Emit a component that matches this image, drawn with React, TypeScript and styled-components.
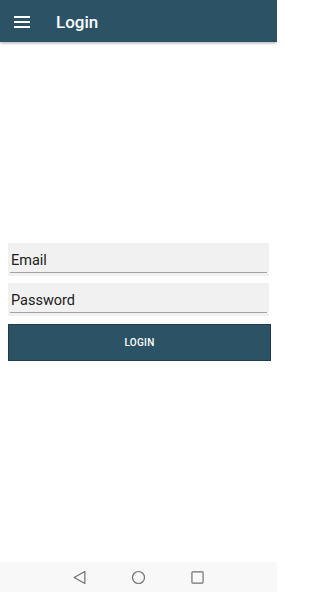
import styled, { createGlobalStyle } from 'styled-components';

const GlobalStyle = createGlobalStyle`
	html, body, #root {
		margin: 0;
		padding: 0;
		height: 100%;
	}
	body {
		font-family: Roboto, "Noto Sans", sans-serif;
		background: #ffffff;
	}
	* {
		box-sizing: border-box;
	}
`;

const App = () => {
	return (
		<Screen>
			<GlobalStyle />
			<AppBar>
				<MenuButton aria-label="menu">
					<svg width="16" height="12" viewBox="0 0 16 12">
						<rect x="0" y="0" width="16" height="2" fill="#ffffff" />
						<rect x="0" y="5" width="16" height="2" fill="#ffffff" />
						<rect x="0" y="10" width="16" height="2" fill="#ffffff" />
					</svg>
				</MenuButton>
				<Title>Login</Title>
			</AppBar>
			<Content>
				<Form>
					<Field>
						<Input placeholder="Email" />
					</Field>
					<Field>
						<Input placeholder="Password" type="password" />
					</Field>
					<LoginButton>LOGIN</LoginButton>
				</Form>
			</Content>
			<NavBar>
				<svg width="15" height="15" viewBox="0 0 14 14">
					<path d="M12 1.5 L2 7 L12 12.5 Z" fill="none" stroke="#6f6f6f" strokeWidth="1.1" strokeLinejoin="round" />
				</svg>
				<svg width="15" height="15" viewBox="0 0 14 14">
					<circle cx="7" cy="7" r="5.6" fill="none" stroke="#6f6f6f" strokeWidth="1.1" />
				</svg>
				<svg width="15" height="15" viewBox="0 0 14 14">
					<rect x="1.8" y="1.8" width="10.4" height="10.4" rx="0.8" fill="none" stroke="#6f6f6f" strokeWidth="1.1" />
				</svg>
			</NavBar>
		</Screen>
	);
};

const Screen = styled.div`
	display: flex;
	flex-direction: column;
	height: 592px;
	width: 277px;
	overflow: hidden;
`;

const AppBar = styled.header`
	height: 42px;
	flex-shrink: 0;
	background: #2c5266;
	display: flex;
	align-items: center;
	padding-left: 14px;
	gap: 26px;
	box-shadow: 0 1px 3px rgba(0, 0, 0, 0.35);
	position: relative;
	z-index: 1;
`;

const MenuButton = styled.div`
	display: flex;
	align-items: center;
	width: 16px;
	height: 12px;
	margin-top: 1px;
`;

const Title = styled.h1`
	margin: 0;
	color: #ffffff;
	font-family: Roboto, sans-serif;
	font-weight: 500;
	font-size: 17px;
	margin-top: 1px;
`;

const Content = styled.main`
	flex: 1;
	display: flex;
	flex-direction: column;
	padding: 201px 6px 0 8px;
`;

const Form = styled.div`
	display: flex;
	flex-direction: column;
	gap: 7px;
`;

const Field = styled.div`
	background: #f1f1f1;
	height: 33px;
	margin-right: 2px;
	padding: 0 2px 3px 2px;
	display: flex;
	align-items: flex-end;
`;

const Input = styled.input`
	width: 100%;
	border: none;
	border-bottom: 1.5px solid #a3a3a3;
	background: transparent;
	padding: 0 0 3px 1px;
	font-family: Roboto, sans-serif;
	font-size: 14.5px;
	color: #202020;
	outline: none;

	&::placeholder {
		color: #202020;
	}
`;

const LoginButton = styled.button`
	margin-top: 1px;
	height: 37px;
	background: #2c5266;
	border: 1px solid #1f3c4c;
	color: #ffffff;
	font-family: Roboto, sans-serif;
	font-weight: 500;
	font-size: 10px;
	letter-spacing: 0.3px;
	cursor: pointer;
`;

const NavBar = styled.nav`
	height: 30px;
	flex-shrink: 0;
	background: #f8f8f8;
	display: flex;
	align-items: center;
	justify-content: center;
	gap: 44px;
`;

export default App;
